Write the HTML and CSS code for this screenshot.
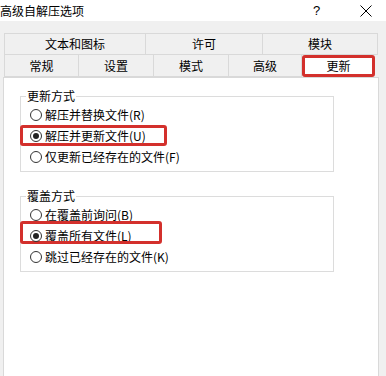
FILE: index.html
```html
<!DOCTYPE html>
<html lang="zh">
<head>
<meta charset="utf-8">
<title>高级自解压选项</title>
<link rel="stylesheet" href="styles.css">
</head>
<body>
<div class="window">
  <div class="titlebar">
    <span class="title">高级自解压选项</span>
    <span class="help">?</span>
    <span class="close"><svg width="12" height="12" viewBox="0 0 12 12"><path d="M0.5 0.5 L11.5 11.5 M11.5 0.5 L0.5 11.5" stroke="#000" stroke-width="1" fill="none"/></svg></span>
  </div>
  <div class="tabs">
    <div class="tabrow row1">
      <div class="tab w142">文本和图标</div>
      <div class="tab w117">许可</div>
      <div class="tab w115">模块</div>
    </div>
    <div class="tabrow row2">
      <div class="tab w75">常规</div>
      <div class="tab w75">设置</div>
      <div class="tab w75">模式</div>
      <div class="tab w73">高级</div>
      <div class="tab w73 active">更新</div>
    </div>
  </div>
  <div class="panel">
    <fieldset class="group">
      <legend>更新方式</legend>
      <div class="opt"><span class="radio"></span><span class="lbl">解压并替换文件(R)</span></div>
      <div class="opt"><span class="mark m1"></span><span class="radio on"></span><span class="lbl">解压并更新文件(U)</span></div>
      <div class="opt"><span class="radio"></span><span class="lbl">仅更新已经存在的文件(F)</span></div>
    </fieldset>
    <fieldset class="group g2">
      <legend>覆盖方式</legend>
      <div class="opt"><span class="radio"></span><span class="lbl">在覆盖前询问(B)</span></div>
      <div class="opt"><span class="mark m2"></span><span class="radio on"></span><span class="lbl">覆盖所有文件(L)</span></div>
      <div class="opt"><span class="radio"></span><span class="lbl">跳过已经存在的文件(K)</span></div>
    </fieldset>
  </div>
</div>
</body>
</html>
```
FILE: styles.css
```css
html, body {
  margin: 0;
  padding: 0;
  background: #f0f0f0;
  font-family: "Noto Sans CJK SC", "Noto Sans", sans-serif;
  font-size: 12px;
  color: #000;
  overflow: hidden;
}
.window {
  width: 386px;
  height: 376px;
  display: flex;
  flex-direction: column;
}
.titlebar {
  height: 21px;
  background: #fff;
  display: flex;
  align-items: center;
  flex: none;
}
.title {
  margin-left: 0;
  flex: 1;
  line-height: 16px;
}
.help {
  width: 10px;
  margin-right: 37px;
  font-family: "Liberation Sans", sans-serif;
  font-size: 13px;
}
.close {
  display: flex;
  margin-right: 14px;
}
.tabs {
  margin: 12px 0 0 4px;
  flex: none;
}
.tabrow {
  display: flex;
  height: 22px;
}
.tab {
  box-sizing: border-box;
  height: 22px;
  border: 1px solid #d9d9d9;
  border-left: none;
  background: #f0f0f0;
  display: flex;
  align-items: center;
  justify-content: center;
  line-height: 16px;
}
.tab:first-child { border-left: 1px solid #d9d9d9; }
.row2 .tab { border-top: none; }
.w142 { width: 142px; }
.w117 { width: 117px; }
.w115 { width: 115px; }
.w75 { width: 75px; }
.w73 { width: 73px; }
.tab.active {
  background: #fff;
  border: 3px solid #d3302c;
  border-radius: 3px;
  height: 22px;
}
.panel {
  margin-left: 3px;
  width: 376px;
  flex: 1;
  box-sizing: border-box;
  background: #fff;
  border: 1px solid #d9d9d9;
  border-bottom: none;
  padding: 10px 0 0 16px;
}
.group {
  box-sizing: border-box;
  width: 314px;
  margin: 0;
  padding: 0 0 4px 9px;
  border: 1px solid #dcdcdc;
}
.group legend {
  margin-left: -4px;
  padding: 0 1px;
  line-height: 16px;
  height: 16px;
}
.g2 { margin-top: 16px; }
.opt {
  position: relative;
  height: 21px;
  display: flex;
  align-items: center;
}
.radio {
  box-sizing: border-box;
  width: 12px;
  height: 12px;
  border: 1px solid #333;
  border-radius: 50%;
  margin-right: 3px;
  position: relative;
  flex: none;
}
.radio.on::after {
  content: "";
  position: absolute;
  left: 2px;
  top: 2px;
  width: 6px;
  height: 6px;
  border-radius: 50%;
  background: #222;
}
.lbl { line-height: 16px; }
.mark {
  position: absolute;
  box-sizing: border-box;
  border: 3px solid #d3302c;
  border-radius: 3px;
  left: -10px;
}
.m1 { top: 0; height: 21px; width: 147px; }
.m2 { top: -4px; height: 23px; width: 142px; }
```
